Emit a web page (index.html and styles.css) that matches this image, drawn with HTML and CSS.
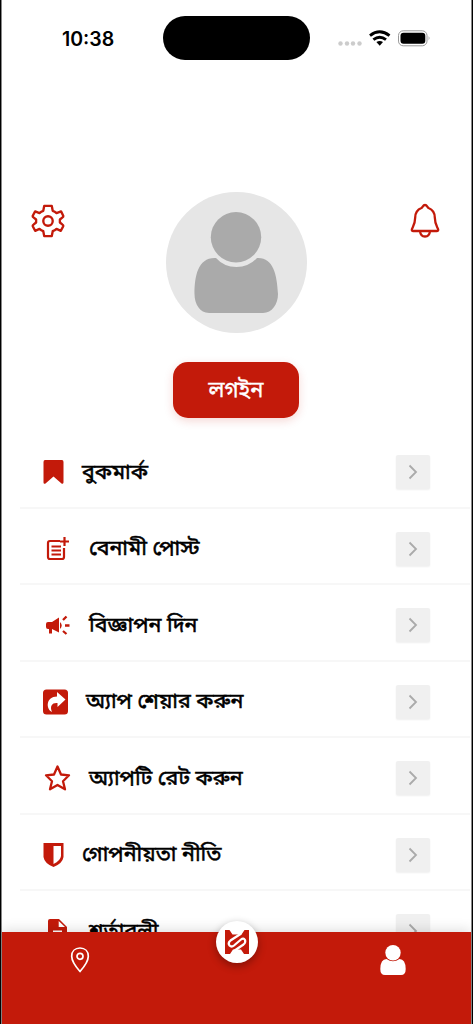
FILE: index.html
```html
<!DOCTYPE html>
<html lang="bn">
<head>
<meta charset="utf-8">
<meta name="viewport" content="width=device-width, initial-scale=1">
<title>Profile</title>
<link rel="stylesheet" href="styles.css">
</head>
<body>
<div class="phone">
  <header class="status">
    <span class="time">10:38</span>
    <span class="island"></span>
    <svg class="indicators" width="94" height="20" viewBox="0 0 94 20">
      <g fill="#ccc"><circle cx="2.500" cy="14.5" r="2.2"/><circle cx="9" cy="14.5" r="2.2"/><circle cx="15" cy="14.5" r="2.2"/><circle cx="21.500" cy="14.5" r="2.2"/></g>
      <g fill="none" stroke="#000" stroke-width="2.9"><path d="M32 6.7Q41.7-1 51.5 6.7"/><path d="M35.4 10.7Q41.7 5.7 48 10.7"/></g>
      <path d="M38.4 13.1Q41.7 10.7 45 13.1L41.7 16.7Z"/>
      <rect x="60.500" y="1.800" width="28.500" height="15" rx="4.7" fill="none" stroke="#999"/>
      <rect x="62.500" y="3.800" width="24.8" height="11" rx="3"/><path d="M90.7 7q1.7 2.2 0 4.4Z" fill="#888"/>
    </svg>
  </header>
  <section class="profile">
    <svg class="gear" width="34" height="34" viewBox="0 0 36 36" fill="none" stroke="#c31a0a" stroke-width="2.500" stroke-linejoin="round"><path d="M14 2H22L23 7.2Q25.2 8 27 9.6L31.8 7.8L34 12.2Q34.5 13.4 33.4 14.2L30.6 16.4V19.6L33.4 21.8Q34.5 22.6 34 23.8L31.6 28.4L27 26.4Q25.2 28 23 28.8L22 34H14L13 28.8Q10.8 28 9 26.4L4.4 28.4L2 23.8Q1.5 22.6 2.6 21.8L5.4 19.6V16.4L2.6 14.2Q1.5 13.4 2 12.2L4.4 7.8L9 9.6Q10.8 8 13 7.2Z"/><circle cx="18" cy="18" r="5"/></svg>
    <div class="account">
      <svg width="141" height="141" viewBox="0 0 141 141"><circle cx="70.5" cy="70.5" r="70.5" fill="#e6e6e6"/><g fill="#aaa"><circle cx="70" cy="45.2" r="25.2"/><path d="M50 66C32 65 28.5 84 28.5 102C28.5 112 34 121 43 121H97C106 121 112 112 112 102C111 82 107 65 91 66Q83 75 70.500 75Q58 75 50 66Z"/></g></svg>
      <button class="login"><span>লগইন</span></button>
    </div>
    <svg class="bell" width="30" height="36" viewBox="0 0 30 36" fill="none" stroke="#c31a0a" stroke-width="2.3" stroke-linejoin="round"><path d="M15 2C13 2 12.500 4.500 11.500 5C7.500 6.500 5.300 10 5.200 14.500C5.100 20.500 3.700 22.500 2.300 25.200Q1 28 3 28H27Q29 28 27.700 25.200C26.300 22.500 24.900 20.500 24.800 14.500C24.700 10 22.500 6.500 18.500 5C17.500 4.500 17 2 15 2Z"/><path d="M10 28Q10.500 33.500 15 33.500Q19.500 33.500 20 28"/></svg>
  </section>
  <main class="menu">
    <div class="row"><svg width="21" height="26" viewBox="0 0 21 26"><path d="M2 1H19Q20.500 1 20.500 3V23.500Q20 25.500 18.500 24.400L10.500 17.500L2.500 24.400Q.7 25.500.5 23.500V3Q.5 1 2 1Z"/></svg><span class="label">বুকমার্ক</span><i class="chevron"><svg width="10" height="16" viewBox="0 0 10 16"><path d="M1.500 1.500L8 8L1.500 14.500"/></svg></i></div>
    <div class="row"><svg width="28" height="28" viewBox="0 0 28 28"><path d="M17 6H7Q5 6 5 8V22Q5 24 7 24H19Q21 24 21 22V13" fill="none" stroke="#c31a0a" stroke-width="2.200"/><path d="M21.500 2V11M17 6.500H26M8.500 11.500H18M8.500 15.500H18M8.500 19.500H18" stroke="#c31a0a" stroke-width="2.200"/></svg><span class="label">বেনামী পোস্ট</span><i class="chevron"><svg width="10" height="16" viewBox="0 0 10 16"><path d="M1.500 1.500L8 8L1.500 14.500"/></svg></i></div>
    <div class="row"><svg width="28" height="28" viewBox="0 0 28 28"><path d="M5 11H9L16 6.500V21.500L9 18V22.500H6V18H5Q3 18 3 16V13Q3 11 5 11ZM17 11Q20.500 14.500 17 18Z"/><path d="M20 9L23.500 5.500M22 14.500H26.500M20 20L23.500 23" stroke="#c31a0a" stroke-width="2.300"/></svg><span class="label">বিজ্ঞাপন দিন</span><i class="chevron"><svg width="10" height="16" viewBox="0 0 10 16"><path d="M1.500 1.500L8 8L1.500 14.500"/></svg></i></div>
    <div class="row"><svg width="25" height="26" viewBox="0 0 25 26"><rect y=".5" width="25" height="25" rx="3.500"/><path d="M14 3L22.500 10.500L14.500 18V14C9 13.500 6.500 17 9 23C2.500 20 3 7.500 14 7.500Z" fill="#fff"/></svg><span class="label">অ্যাপ শেয়ার করুন</span><i class="chevron"><svg width="10" height="16" viewBox="0 0 10 16"><path d="M1.500 1.500L8 8L1.500 14.500"/></svg></i></div>
    <div class="row"><svg width="28" height="28" viewBox="0 0 28 28"><path d="M14.500 2.500L18 10.500L26 11.300L20 17.200L22 25.300L14.500 21L7 25.300L9 17.200L3 11.300L11 10.500Z" fill="none" stroke="#c31a0a" stroke-width="2.300" stroke-linejoin="round"/></svg><span class="label">অ্যাপটি রেট করুন</span><i class="chevron"><svg width="10" height="16" viewBox="0 0 10 16"><path d="M1.500 1.500L8 8L1.500 14.500"/></svg></i></div>
    <div class="row"><svg width="21" height="26" viewBox="0 0 21 26"><path d="M.5 1H20.500V15Q19.500 21.500 10.500 25Q1.500 21.500.5 15Z"/><path d="M10.500 4H18V14Q17.500 18.500 10.500 22Z" fill="#fff"/></svg><span class="label">গোপনীয়তা নীতি</span><i class="chevron"><svg width="10" height="16" viewBox="0 0 10 16"><path d="M1.500 1.500L8 8L1.500 14.500"/></svg></i></div>
    <div class="row"><svg width="28" height="28" viewBox="0 0 28 28"><path d="M7 2H16L24 10V25Q24 27 22 27H7Q5 27 5 25V4Q5 2 7 2Z"/><path d="M15.700 4V10H22ZM10 13.500H19V15H10Z" fill="#fff"/></svg><span class="label">শর্তাবলী</span><i class="chevron"><svg width="10" height="16" viewBox="0 0 10 16"><path d="M1.500 1.500L8 8L1.500 14.500"/></svg></i></div>
  </main>
  <nav class="tabs">
    <svg class="pin" width="20" height="28" viewBox="0 0 20 28" fill="none" stroke="#fff" stroke-width="1.700" stroke-linejoin="round"><path d="M10 2C5 2 1.700 5.300 1.700 10.200C1.700 14.500 6.500 21.500 10 25.500C13.500 21.500 18.300 14.500 18.300 10.200C18.300 5.300 15 2 10 2Z"/><circle cx="10" cy="10.300" r="3"/></svg>
    <span class="home"><svg width="26" height="26" viewBox="0 0 26 26"><path d="M1 1H5.500L8.500 5.500H17.500L20.500 1H25V25H20L17 20.500H9L6 25H1Z" fill="#c31a0a"/><path d="M16.500 5L6.500 11.500Q3.500 14 5.500 16.500Q7.500 18.500 10 16.500L17 10.500Q19.500 8.500 21 11Q22 13.500 19.500 15.500L10 22" fill="none" stroke="#fff" stroke-width="2.200" stroke-linecap="round"/></svg></span>
    <svg class="person" width="26" height="32" viewBox="0 0 26 32" fill="#fff"><circle cx="13" cy="8.700" r="7.700"/><path d="M6.500 15Q.5 15 .3 25Q.3 31 5 31H21Q25.700 31 25.700 25Q25.500 15 19.500 15Q13 19.500 6.500 15Z"/></svg>
  </nav>
</div>
</body>
</html>
```
FILE: styles.css
```css
* { box-sizing: border-box; }
body { margin: 0; background: #fff; }
.phone {
  width: 473px; height: 1024px; overflow: hidden; padding: 0 1px;
  display: flex; flex-direction: column;
  background: #fff; border: solid #000; border-width: 0 1px;
  box-shadow: inset 1px 0 #888, inset -1px 0 #888;
  font-family: "Noto Sans Bengali", "Noto Sans", sans-serif;
}
.status { height: 192px; padding: 16px 38px 0 60px; display: flex; align-items: flex-start; flex: none; }
.time { width: 101px; padding-top: 11px; font: 600 19.5px/24px Inter, sans-serif; }
.island { width: 147px; height: 44px; border-radius: 22px; background: #000; }
.indicators { margin: 13px 0 0 28px; flex: none; }
.profile { height: 239px; padding: 0 31px 0 29px; display: flex; justify-content: space-between; flex: none; }
.gear { margin-top: 12px; }
.bell { margin-top: 11px; }
.account { width: 141px; margin-left: -3px; display: flex; flex-direction: column; align-items: center; }
.login {
  width: 126px; height: 56px; margin: 29px 0 0; padding: 3px 0 0; border: 0; border-radius: 15px;
  background: #c31a0a; color: #fff; box-shadow: 0 3px 10px #c31a0a2b;
  font: 400 21.8px/30px "Noto Sans Bengali", "Noto Sans", sans-serif;
  -webkit-text-stroke: .4px #fff;
}
.menu { flex: 1; min-height: 0; overflow: hidden; padding: 1px 1px 0 18px; }
.row { height: 76.5px; padding: 6px 40px 0 23px; display: flex; align-items: center; gap: 18px; border-bottom: 2px solid #f7f7f7; }
.row > svg { fill: #c31a0a; flex: none; }
.label { padding-top: 3px; color: #000; font-size: 21.4px; line-height: 34px; font-weight: 400; white-space: nowrap; -webkit-text-stroke: .55px #000; }
.chevron { width: 34px; height: 34px; margin-left: auto; display: grid; place-items: center; background: #f0f0f0; box-shadow: 0 1px 2px #0001; border-radius: 2px; }
.chevron path { fill: none; stroke: #aaa; stroke-width: 1.8; }
.tabs { height: 92.5px; flex: none; display: flex; justify-content: space-between; align-items: flex-start; padding: 0 65px 0 68px; background: #c31a0a; box-shadow: 0 -2px 12px #0002; z-index: 1; }
.pin { margin-top: 14px; }
.home { width: 42px; height: 42px; margin: -11px 0 0 3px; border-radius: 50%; background: #fff; display: grid; place-items: center; box-shadow: 0 3px 8px #0005; }
.person { margin-top: 12px; }
```
